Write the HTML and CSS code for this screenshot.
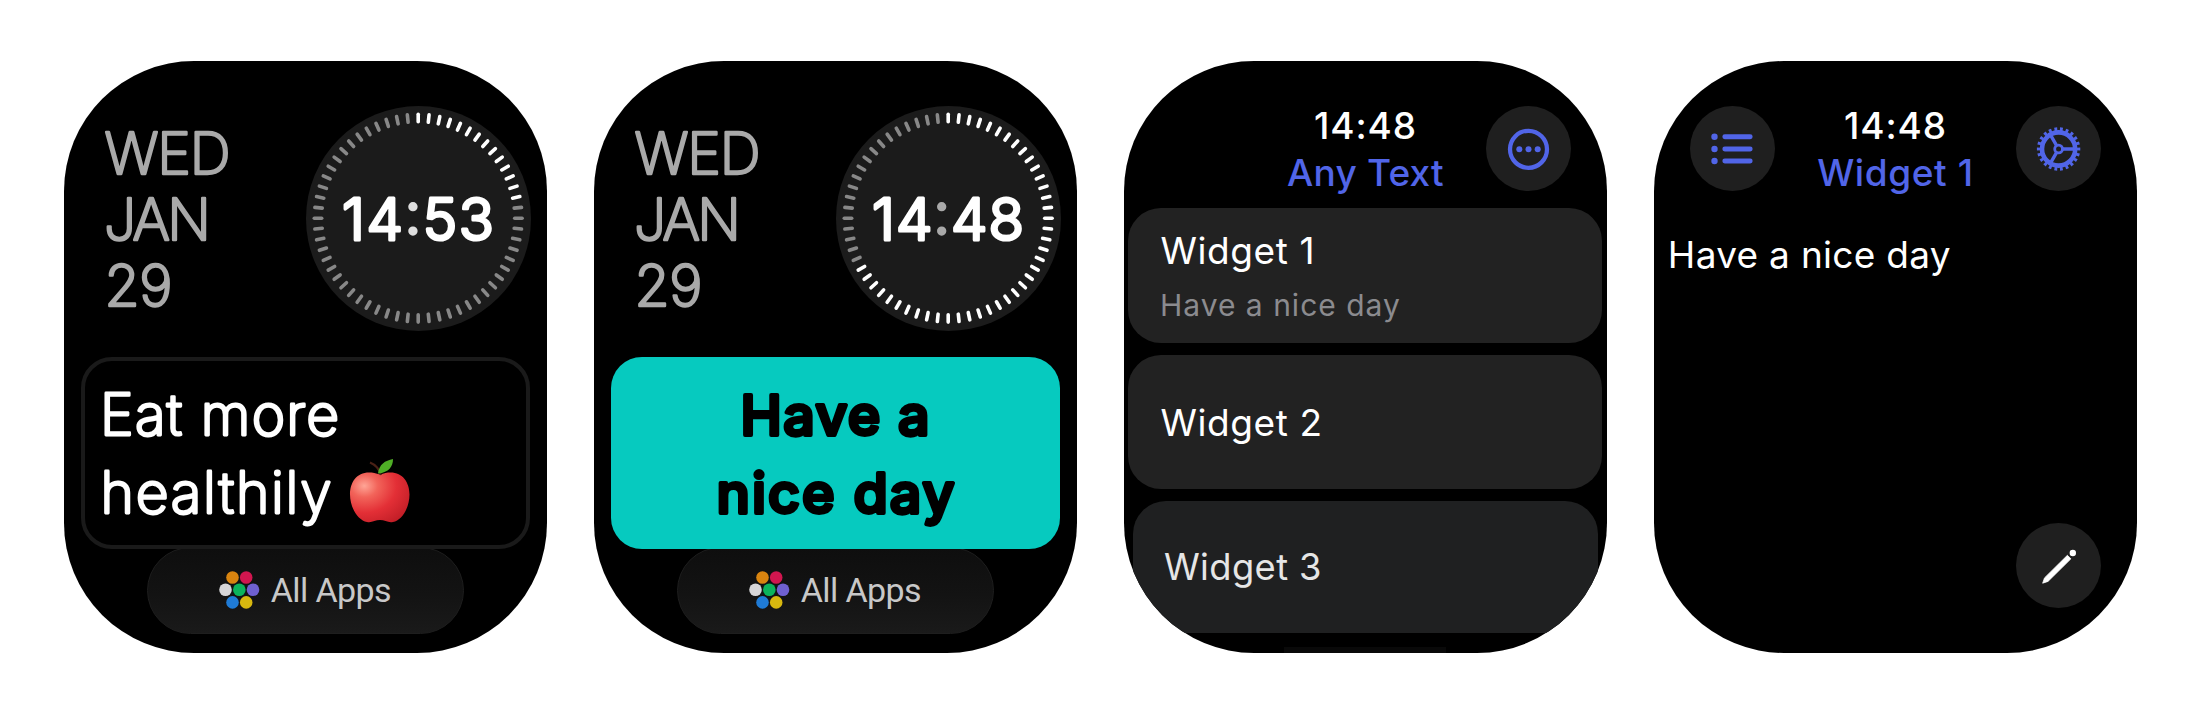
FILE: index.html
```
<!DOCTYPE html>
<html lang="en">
<head>
<meta charset="utf-8">
<title>Any Text for watch</title>
<link rel="stylesheet" href="styles.css">
</head>
<body>
<main class="gallery">

  <section class="screen face">
    <div class="face-top">
      <svg class="date" width="140" height="196" viewBox="0 0 140 196">
        <text x="1.5" y="51.5" textLength="126">WED</text>
        <text x="1" y="117.5" textLength="107">JAN</text>
        <text x="1.5" y="183.5" textLength="68">29</text>
      </svg>
      <svg class="dial" width="225" height="225" viewBox="0 0 225 225">
        <circle class="dial-bg" cx="112.5" cy="112.5" r="112.5"/>
        <g class="ticks" data-lit="14"></g>
        <text class="clock" x="36" y="133.5" textLength="152">14<tspan fill="#dedede" stroke="#dedede">:</tspan>53</text>
      </svg>
    </div>
    <div class="note note-outline">
      <svg width="441" height="183" viewBox="0 0 441 183">
        <text class="note-light" x="15" y="74" textLength="239">Eat more</text>
        <text class="note-light" x="15.5" y="152" textLength="231">healthily</text>
        <g transform="translate(265 97.5)">
          <path d="M30 16C10 9 0 21 0 36C0 49 8 62 17 63.5C22 64.5 25 61.5 30 61.5C35 61.5 38 64.5 43 63.5C52 62 59.5 49 59.5 36C59.5 21 49 9 30 16Z" fill="url(#apple)"/>
          <path d="M31 16.500C29 10 25 6 20 4" fill="none" stroke="#4b2116" stroke-width="2"/>
          <path d="M28 15C29 6 35 2 43 .5C43 8 39 14 28 15Z" fill="#4fae26"/>
        </g>
        <defs>
          <radialGradient id="apple" cx="0.24" cy="0.27" r="0.9">
            <stop offset="0" stop-color="#ffa596"/>
            <stop offset="0.25" stop-color="#f2645a"/>
            <stop offset="0.6" stop-color="#e32f36"/>
            <stop offset="1" stop-color="#c01d26"/>
          </radialGradient>
        </defs>
      </svg>
    </div>
    <div class="all-apps">
      <svg width="41" height="38" viewBox="0 0 41 38">
        <circle cx="13.500" cy="6.500" r="6.300" fill="#d9840f"/><circle cx="27.200" cy="6.500" r="6.300" fill="#d1164f"/>
        <circle cx="6.500" cy="18.800" r="6.300" fill="#d6d6d8"/><circle cx="20.300" cy="18.800" r="6.300" fill="#0cb35c"/><circle cx="34" cy="18.800" r="6.300" fill="#6f60cf"/>
        <circle cx="13.500" cy="31.400" r="6.300" fill="#1f7bd6"/><circle cx="27.200" cy="31.400" r="6.300" fill="#d8b80f"/>
      </svg>
      <span>All Apps</span>
    </div>
  </section>

  <section class="screen face">
    <div class="face-top">
      <svg class="date" width="140" height="196" viewBox="0 0 140 196">
        <text x="1.5" y="51.5" textLength="126">WED</text>
        <text x="1" y="117.5" textLength="107">JAN</text>
        <text x="1.5" y="183.5" textLength="68">29</text>
      </svg>
      <svg class="dial" width="225" height="225" viewBox="0 0 225 225">
        <circle class="dial-bg" cx="112.5" cy="112.5" r="112.5"/>
        <g class="ticks" data-lit="41"></g>
        <text class="clock" x="36" y="133.5" textLength="152">14<tspan fill="#a9a9a9" stroke="#a9a9a9">:</tspan>48</text>
      </svg>
    </div>
    <div class="note note-teal">
      <svg width="449" height="191" viewBox="0 0 449 191">
        <text class="note-bold" x="129.500" y="77.500" textLength="189">Have a</text>
        <text class="note-bold" x="105.500" y="155.500" textLength="238">nice day</text>
      </svg>
    </div>
    <div class="all-apps">
      <svg width="41" height="38" viewBox="0 0 41 38">
        <circle cx="13.500" cy="6.500" r="6.300" fill="#d9840f"/><circle cx="27.200" cy="6.500" r="6.300" fill="#d1164f"/>
        <circle cx="6.500" cy="18.800" r="6.300" fill="#d6d6d8"/><circle cx="20.300" cy="18.800" r="6.300" fill="#0cb35c"/><circle cx="34" cy="18.800" r="6.300" fill="#6f60cf"/>
        <circle cx="13.500" cy="31.400" r="6.300" fill="#1f7bd6"/><circle cx="27.200" cy="31.400" r="6.300" fill="#d8b80f"/>
      </svg>
      <span>All Apps</span>
    </div>
  </section>

  <section class="screen">
    <header class="bar">
      <span></span>
      <div class="bar-title"><div class="time">14:48</div><div class="title">Any Text</div></div>
      <div class="round-btn">
        <svg width="85" height="85" viewBox="0 0 85 85" fill="#5165e8">
          <circle cx="42.500" cy="43.300" r="18.500" fill="none" stroke="#5165e8" stroke-width="4.300"/>
          <circle cx="33.300" cy="43.300" r="3"/><circle cx="42.500" cy="43.300" r="3"/><circle cx="51.700" cy="43.300" r="3"/>
        </svg>
      </div>
    </header>
    <div class="list">
      <div class="card card-tall"><div class="name">Widget 1</div><div class="sub">Have a nice day</div></div>
      <div class="card card-mid"><div class="name">Widget 2</div></div>
      <div class="card card-far"><div class="name">Widget 3</div></div>
      <div class="card-next"></div>
    </div>
  </section>

  <section class="screen">
    <header class="bar">
      <div class="round-btn">
        <svg width="85" height="85" viewBox="0 0 85 85" fill="#5165e8">
          <circle cx="24.500" cy="30.700" r="3.200"/><circle cx="24.500" cy="43" r="3.200"/><circle cx="24.500" cy="55" r="3.200"/>
          <path d="M34.800 30.700H60.200M34.800 43H60.200M34.800 55H60.200" stroke="#5165e8" stroke-width="4.900" stroke-linecap="round"/>
        </svg>
      </div>
      <div class="bar-title"><div class="time">14:48</div><div class="title title-wide">Widget 1</div></div>
      <div class="round-btn">
        <svg width="85" height="85" viewBox="0 0 85 85" fill="none" stroke="#5165e8">
          <circle cx="42.600" cy="43" r="16.600" stroke-width="4.600"/>
          <circle cx="42.600" cy="43" r="19.700" stroke-width="4" pathLength="44" stroke-dasharray="1 1" stroke-dashoffset="0.5"/>
          <circle cx="42.600" cy="43" r="3.900" stroke-width="2.800"/>
          <path d="M46.800 43H59M40.500 39.400L34.300 28.600M40.500 46.600L34.300 57.400" stroke-width="3.400"/>
        </svg>
      </div>
    </header>
    <p class="body-text">Have a nice day</p>
    <div class="round-btn edit">
      <svg width="85" height="85" viewBox="0 0 85 85" fill="#fff">
        <path d="M26.700 60.200L28.500 54.900L51.400 32.300L54.900 35.800L32 58.400Z" stroke="#fff" stroke-width=".8" stroke-linejoin="round"/>
        <circle cx="56.800" cy="30" r="3.200"/>
      </svg>
    </div>
  </section>

</main>
<script src="dial.js"></script>
</body>
</html>
```
FILE: styles.css
```
* { box-sizing: border-box; }
body {
  margin: 0;
  background: #fff;
  font-family: Inter, "Liberation Sans", sans-serif;
  color: #fff;
}
.gallery {
  display: flex;
  gap: 46.4px;
  height: 716px;
  padding: 61.3px 0 0 63.7px;
}
.screen {
  flex: none;
  display: flex;
  flex-direction: column;
  width: 483.6px;
  height: 591.5px;
  border-radius: 130px;
  background: #000;
  overflow: hidden;
}
svg { display: block; flex: none; }

/* watch face */
.face { align-items: center; }
.face-top {
  display: flex;
  justify-content: space-between;
  align-items: flex-start;
  width: 100%;
  height: 296px;
  padding: 45px 16.2px 0 39px;
}
.date { margin-top: 15.5px; overflow: visible; }
.date text, .clock, .note-light, .note-bold {
  font-family: Inter, sans-serif;
  stroke-linejoin: round;
}
.date text {
  font-size: 57px;
  font-weight: 200;
  fill: #a9a9a9;
  stroke: #a9a9a9;
  stroke-width: 2.6px;
}
.dial-bg { fill: #1b1b1b; }
.clock {
  font-size: 58px;
  font-weight: 300;
  fill: #fff;
  stroke: #fff;
  stroke-width: 3.2px;
}
.tick { stroke: #888; stroke-width: 3.6; stroke-linecap: round; }
.tick-lit { stroke: #fff; }
.note {
  flex: none;
  position: relative;
  width: 449.3px;
  height: 191.6px;
  border-radius: 31px;
  background: #000;
  z-index: 1;
}
.note-outline { border: 4px solid #1a1a1a; }
.note-teal { background: #06cabf; }
.note-light {
  font-size: 57px;
  font-weight: 200;
  fill: #fff;
  stroke: #fff;
  stroke-width: 2.9px;
}
.note-bold {
  font-size: 55.500px;
  font-weight: 500;
  fill: #000;
  stroke: #000;
  stroke-width: 3.8px;
}
.all-apps {
  flex: none;
  display: flex;
  align-items: center;
  gap: 11px;
  width: 317.6px;
  height: 86.8px;
  margin-top: -2px;
  padding-left: 71px;
  border: 1.5px solid #1e1e1e;
  border-radius: 44px;
  background: linear-gradient(#0e0e0e, #131313 55%, #1a1a1a);
  color: #c8c8c8;
  font-family: Roboto, sans-serif;
  font-size: 34px;
  letter-spacing: -.6px;
}

/* app screens */
.bar {
  flex: none;
  display: grid;
  grid-template-columns: 85px 1fr 85px;
  height: 146.4px;
  padding: 44.7px 36.5px 0;
}
.round-btn {
  width: 85px;
  height: 85px;
  border-radius: 50%;
  background: #1f1f1f;
}
.bar-title {
  margin-top: -4px;
  text-align: center;
  font-size: 37px;
  font-weight: 500;
  line-height: 47px;
}
.time { letter-spacing: .9px; }
.title { color: #5165e8; letter-spacing: .2px; }
.title-wide { letter-spacing: .6px; }
.list { padding: 0 4.8px; }
.card {
  display: flex;
  flex-direction: column;
  justify-content: center;
  margin-bottom: 11.7px;
  padding: 0 32px;
  border-radius: 33px;
  background: #222;
}
.card-tall { height: 135.6px; }
.card-mid { height: 134.3px; }
.card-far {
  height: 132px;
  margin: 0 4.5px 14.5px;
  padding: 1.5px 31px 0;
  background: #1f2021;
  color: #e6e6e6;
  border-radius: 33px 33px 0 0;
}
.name { font-size: 37px; line-height: 47px; letter-spacing: .6px; }
.card-far .name { font-size: 36.300px; letter-spacing: .4px; }
.sub {
  margin: 10.6px 0 0 -.5px;
  color: #8b8b8f;
  font-size: 30px;
  line-height: 40px;
  letter-spacing: 1px;
}
.card-tall .name { margin-top: 1px; }
.card-next {
  width: 162px;
  height: 8px;
  margin: 0 auto;
  background: #090909;
}
.body-text {
  margin: 23.6px 0 0 14.2px;
  font-size: 37px;
  line-height: 47px;
  letter-spacing: .3px;
}
.edit { margin: auto 36.5px 44.6px auto; }
```
FILE: dial.js
```
// Sixty second marks per dial; the first data-lit marks are bright.
document.querySelectorAll('.ticks').forEach(function (g) {
  var lit = Number(g.dataset.lit);
  for (var i = 0; i < 60; i++) {
    var l = document.createElementNS('http://www.w3.org/2000/svg', 'line');
    l.setAttribute('x1', 112.2);
    l.setAttribute('x2', 112.2);
    l.setAttribute('y1', 8.3);
    l.setAttribute('y2', 15.7);
    l.setAttribute('transform', 'rotate(' + i * 6 + ' 112.2 112.2)');
    l.setAttribute('class', i < lit ? 'tick tick-lit' : 'tick');
    g.appendChild(l);
  }
});
```
